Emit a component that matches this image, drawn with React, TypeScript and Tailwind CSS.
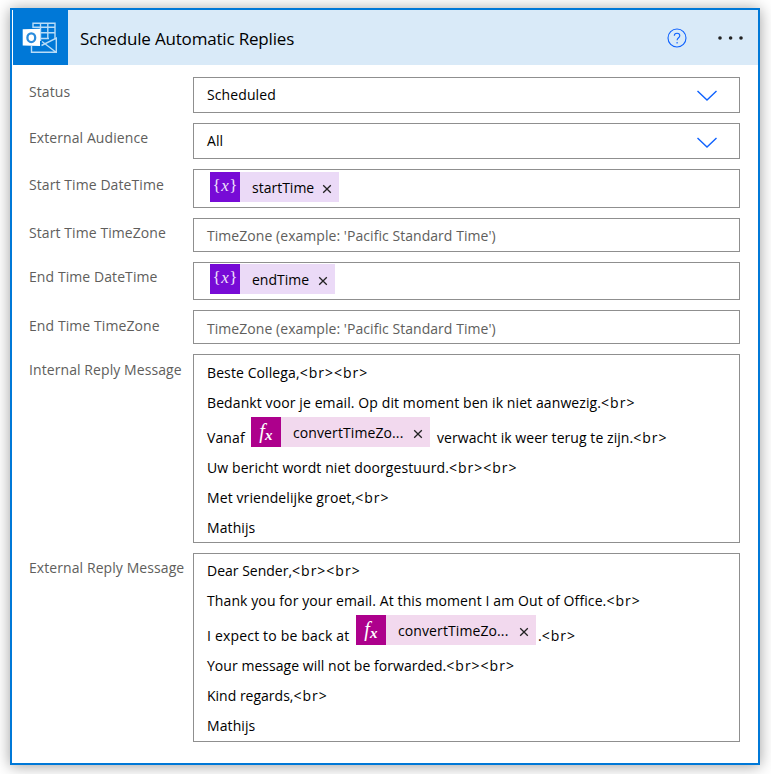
import type { ReactNode } from "react";

function OutlookIcon() {
  return (
    <svg width="55" height="55" viewBox="0 0 55 55" fill="none">
      <g stroke="#b9dcf7" strokeWidth="1.4">
        <path d="M20 18V13.3H42V29" />
        <path d="M20 17.3H42M20 22.8H42M20 28.5H36M27.5 13V31M34.8 13V29" />
        <path d="M18.5 36V42.3H43.3V28.2L28.5 35.5M29 31.5L43 42.3" />
      </g>
      <path d="M9.7 19.3L27 18.8V36L9.7 35.5Z" fill="#fff" />
      <ellipse cx="18.3" cy="27.7" rx="3.9" ry="4.4" stroke="#2b8cdd" strokeWidth="2.3" />
    </svg>
  );
}

function Chevron({ className }: { className: string }) {
  return (
    <svg className={`mr-[21px] shrink-0 ${className}`} width="22" height="12" viewBox="0 0 22 12" fill="none">
      <path d="M1.5 1L11 10L20.5 1" stroke="#0f62fe" strokeWidth="1.4" />
    </svg>
  );
}

function Row({ label, labelClass = "", children }: { label: string; labelClass?: string; children: ReactNode }) {
  return (
    <div className="flex">
      <div className="w-[164px] shrink-0 whitespace-nowrap text-[14px] leading-[30px] tracking-[0.08px] text-[#605e5c]">
        <div className={labelClass}>{label}</div>
      </div>
      <div className="w-[547px]">{children}</div>
    </div>
  );
}

function Token({ kind, className, children }: { kind: "var" | "fx"; className: string; children: ReactNode }) {
  const isVar = kind === "var";
  return (
    <span className={`flex h-[30px] shrink-0 items-center ${isVar ? "bg-[#ebdaf7]" : "bg-[#f2d9ee]"} ${className}`}>
      <span
        className={`flex h-[30px] w-[30px] shrink-0 items-center justify-center font-['Liberation_Serif',serif] text-white ${isVar ? "bg-[#770bd6]" : "bg-[#ad008c]"}`}
      >
        {isVar ? (
          <span className="-mt-[3px] text-[17px] leading-none text-[#f0e2fb]">
            {"{"}
            <i className="px-[0.5px]">x</i>
            {"}"}
          </span>
        ) : (
          <i className="-mt-[3px] text-[20px] leading-none">
            f<span className="relative top-[2px] text-[15px] font-bold">x</span>
          </i>
        )}
      </span>
      <span className="ml-3 flex-1">{children}</span>
      <svg className="mr-[7px] mt-[3px]" width="10" height="10" viewBox="0 0 10 10">
        <path d="M1.2 1.2L8.8 8.8M8.8 1.2L1.2 8.8" stroke="#222" strokeWidth="1.3" />
      </svg>
    </span>
  );
}

function Br({ count = 1 }: { count?: number }) {
  return <span className="tracking-[1px]">{"<br>".repeat(count)}</span>;
}

function Line({ children }: { children: ReactNode }) {
  return <div className="h-[30px] leading-[30px]">{children}</div>;
}

const box = "border border-[#8f8f8f] bg-white text-[14px] whitespace-nowrap";

export default function App() {
  return (
    <div className="h-[774px] w-[771px] overflow-hidden bg-white pl-[10px] pt-2 font-['Open_Sans','Noto_Sans',sans-serif] text-black">
      <div className="h-[757px] w-[750px] border-2 border-[#0078d7] bg-white shadow-[0_1px_14px_rgba(0,0,0,0.38)]">
        <header className="ml-px flex h-[55px] items-center bg-[#d9eaf8]">
          <div className="h-[55px] w-[55px] bg-[#0078d7]">
            <OutlookIcon />
          </div>
          <h1 className="ml-3 mt-[2px] flex-1 text-[17px] leading-6 tracking-[-0.18px]">Schedule Automatic Replies</h1>
          <svg width="20" height="20" viewBox="0 0 20 20" fill="none" stroke="#0f62fe">
            <circle cx="10" cy="10" r="9" strokeWidth="1.1" />
            <path d="M7.3 7.8C7.3 4.3 12.8 4.4 12.8 7.7C12.8 9.8 10.1 9.8 10.1 12.3M10.1 14V15.4" strokeWidth="1.1" />
          </svg>
          <svg className="ml-[30px] mr-[13px]" width="28" height="6" viewBox="0 0 28 6" fill="#222">
            <circle cx="3" cy="3" r="1.8" />
            <circle cx="13.6" cy="3" r="1.8" />
            <circle cx="24" cy="3" r="1.8" />
          </svg>
        </header>
        <main className="flex flex-col gap-[10px] pl-[17px] pt-3">
          <Row label="Status">
            <div className={`${box} flex h-9 items-center justify-between pl-[13px]`}>
              <span className="mb-[2px] tracking-[0.1px]">Scheduled</span>
              <Chevron className="mt-[2px]" />
            </div>
          </Row>
          <Row label="External Audience">
            <div className={`${box} flex h-9 items-center justify-between pl-[13px]`}>
              <span className="mb-[2px] tracking-[0.1px]">All</span>
              <Chevron className="mt-[4px]" />
            </div>
          </Row>
          <Row label="Start Time DateTime" labelClass="pt-px">
            <div className={`${box} flex h-[39px] pl-4 pt-[2px]`}>
              <Token kind="var" className="w-[129px]">startTime</Token>
            </div>
          </Row>
          <Row label="Start Time TimeZone">
            <div className={`${box} flex h-[34px] items-center pl-[13px] tracking-[0.05px] text-[#605e5c]`}>
              TimeZone (example: 'Pacific Standard Time')
            </div>
          </Row>
          <Row label="End Time DateTime">
            <div className={`${box} flex h-[38px] pl-4 pt-px`}>
              <Token kind="var" className="w-[125px]">endTime</Token>
            </div>
          </Row>
          <Row label="End Time TimeZone" labelClass="pt-px">
            <div className={`${box} flex h-[34px] items-center pl-[13px] pt-[2px] tracking-[0.05px] text-[#605e5c]`}>
              TimeZone (example: 'Pacific Standard Time')
            </div>
          </Row>
          <Row label="Internal Reply Message" labelClass="pt-px">
            <div className={`${box} h-[189px] pl-[13px] pt-[3px] tracking-[0.1px]`}>
              <Line>Beste Collega,<Br count={2} /></Line>
              <Line>Bedankt voor je email. Op dit moment ben ik niet aanwezig.<Br /></Line>
              <div className="flex h-[35px]">
                <span className="mt-[5px] w-[44px] leading-[30px]">Vanaf</span>
                <Token kind="fx" className="-mt-px w-[179px]">convertTimeZo...</Token>
                <span className="ml-[7px] mt-[5px] leading-[30px] tracking-[0.06px]">verwacht ik weer terug te zijn.<Br /></span>
              </div>
              <Line>Uw bericht wordt niet doorgestuurd.<Br count={2} /></Line>
              <Line>Met vriendelijke groet,<Br /></Line>
              <Line>Mathijs</Line>
            </div>
          </Row>
          <Row label="External Reply Message">
            <div className={`${box} h-[189px] pl-[13px] pt-[2px] tracking-[0.1px]`}>
              <Line><span className="tracking-normal">Dear Sender,</span><Br count={2} /></Line>
              <Line>Thank you for your email. At this moment I am Out of Office.<Br /></Line>
              <div className="flex h-[35px]">
                <span className="mt-[5px] w-[149px] leading-[30px] tracking-[0.18px]">I expect to be back at</span>
                <Token kind="fx" className="-mt-px w-[180px]">convertTimeZo...</Token>
                <span className="ml-[2px] mt-[5px] leading-[30px]">.<Br /></span>
              </div>
              <Line><span className="tracking-[0.04px]">Your message will not be forwarded.</span><Br count={2} /></Line>
              <Line><span className="tracking-normal">Kind regards,</span><Br /></Line>
              <Line>Mathijs</Line>
            </div>
          </Row>
        </main>
      </div>
    </div>
  );
}
